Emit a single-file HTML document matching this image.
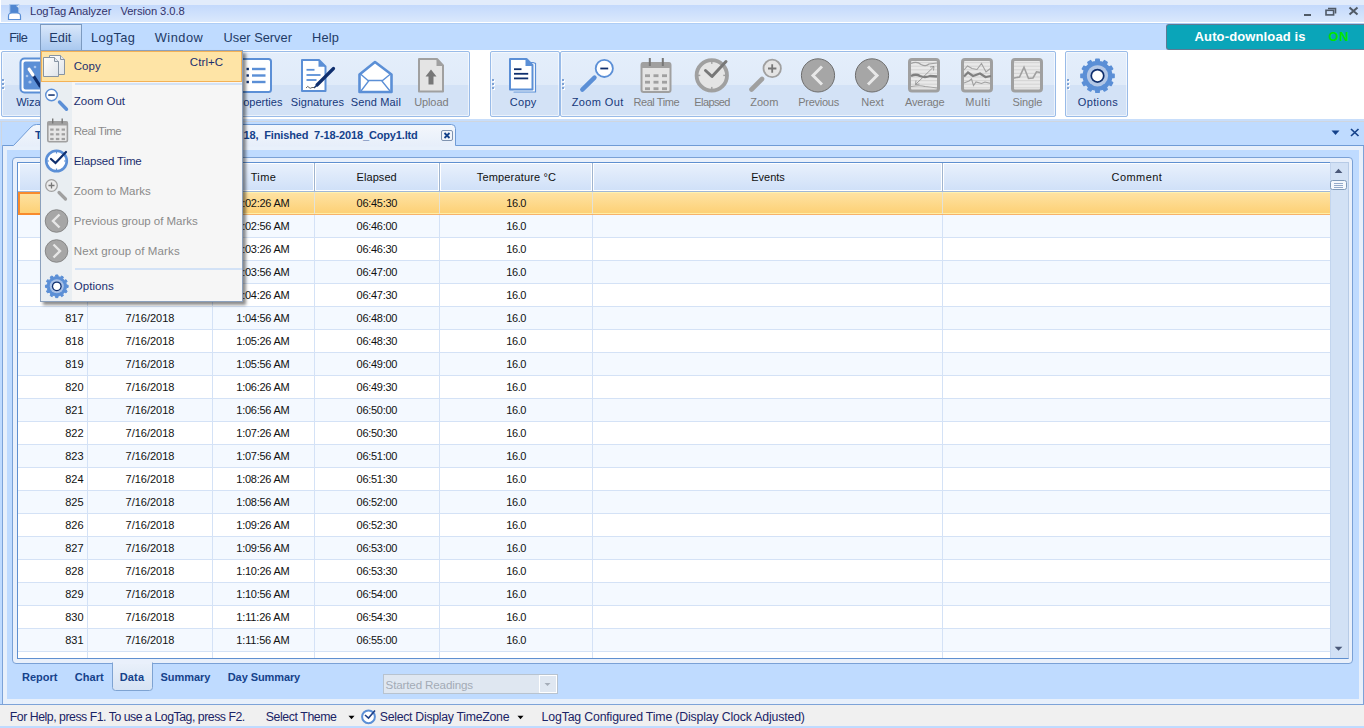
<!DOCTYPE html>
<html><head><meta charset="utf-8"><style>
html,body{margin:0;padding:0;}
body{width:1364px;height:728px;position:relative;overflow:hidden;font-family:"Liberation Sans", sans-serif;background:#bfdbff;}
div{box-sizing:border-box;}
</style></head><body>
<div style="position:absolute;left:0px;top:0px;width:1364px;height:5px;background:#e2ecfb;"></div>
<div style="position:absolute;left:0px;top:5px;width:1364px;height:17px;background:linear-gradient(#c3d9fc,#dae8fc);"></div>
<div style="position:absolute;left:0px;top:22px;width:1364px;height:1px;background:#ffffff;"></div>
<div style="position:absolute;left:0px;top:0px;width:1px;height:22px;background:#ffffff;"></div>
<svg style="position:absolute;left:7px;top:3px" width="15" height="18" viewBox="0 0 15 18"><rect x="2.8" y="1.5" width="9" height="10" fill="#4f86d0" stroke="#a9c8ee" stroke-width="1"/><path d="M11 2 L11.5 4.5 M9.5 3 L11 4" stroke="#fff" stroke-width="0.8"/><path d="M1.5 16.5 V13 Q1.5 10 5 10 H10 Q13.5 10 13.5 13 V16.5 Z" fill="#fff" stroke="#5b8fd6" stroke-width="1.2"/></svg>
<div style="position:absolute;left:30.05px;top:4.68px;font-size:11.2px;line-height:12.88px;color:#33336a;font-weight:normal;white-space:nowrap;letter-spacing:-0.092px;">LogTag Analyzer&nbsp;&nbsp; Version 3.0.8</div>
<div style="position:absolute;left:1304px;top:14px;width:7px;height:2px;background:#505a66;"></div>
<svg style="position:absolute;left:1325px;top:7px" width="12" height="9" viewBox="0 0 12 9"><path d="M3 1.5 H10.5 V6.5" fill="none" stroke="#505a66" stroke-width="1.6"/><rect x="1" y="3.3" width="7.6" height="4.6" fill="none" stroke="#505a66" stroke-width="1.6"/></svg>
<svg style="position:absolute;left:1348px;top:6px" width="11" height="10" viewBox="0 0 11 10"><path d="M1.5 1.5 L9.5 8.5 M9.5 1.5 L1.5 8.5" stroke="#505a66" stroke-width="2"/></svg>
<div style="position:absolute;left:0px;top:23px;width:1364px;height:27px;background:#bfdbff;border-top:1px solid #aecdf5;"></div>
<div style="position:absolute;left:40px;top:24px;width:42px;height:26px;background:linear-gradient(#d9e7fa,#a9c8ef);border:1px solid #7c9ac0;border-bottom:none;"></div>
<div style="position:absolute;left:9.19px;top:30.80px;font-size:12.8px;line-height:14.72px;color:#1e3a66;font-weight:normal;white-space:nowrap;letter-spacing:-0.665px;">File</div>
<div style="position:absolute;left:49.19px;top:30.80px;font-size:12.8px;line-height:14.72px;color:#1e3a66;font-weight:normal;white-space:nowrap;letter-spacing:0.024px;">Edit</div>
<div style="position:absolute;left:90.99px;top:30.80px;font-size:12.8px;line-height:14.72px;color:#1e3a66;font-weight:normal;white-space:nowrap;letter-spacing:0.388px;">LogTag</div>
<div style="position:absolute;left:154.69px;top:30.80px;font-size:12.8px;line-height:14.72px;color:#1e3a66;font-weight:normal;white-space:nowrap;letter-spacing:0.522px;">Window</div>
<div style="position:absolute;left:223.59px;top:30.80px;font-size:12.8px;line-height:14.72px;color:#1e3a66;font-weight:normal;white-space:nowrap;letter-spacing:0.006px;">User Server</div>
<div style="position:absolute;left:312.09px;top:30.80px;font-size:12.8px;line-height:14.72px;color:#1e3a66;font-weight:normal;white-space:nowrap;letter-spacing:0.135px;">Help</div>
<div style="position:absolute;left:1166px;top:24px;width:198px;height:26px;background:#0aa5b9;border:1px solid #5d7a94;border-right:none;border-radius:3px 0 0 3px;"></div>
<div style="position:absolute;left:1194.58px;top:29.72px;font-size:13px;line-height:14.95px;color:#ffffff;font-weight:bold;white-space:nowrap;letter-spacing:0.127px;">Auto-download is</div>
<div style="position:absolute;left:1328.48px;top:29.72px;font-size:13px;line-height:14.95px;color:#00e600;font-weight:bold;white-space:nowrap;letter-spacing:0.740px;">ON</div>
<div style="position:absolute;left:0px;top:50px;width:1364px;height:69px;background:#ffffff;"></div>
<div style="position:absolute;left:1px;top:51px;width:469px;height:66px;background:linear-gradient(#e4eefb 0%,#e0ebf9 51%,#d3e2f6 52%,#d3e2f6 100%);border:1px solid #99bbe8;border-radius:2px;box-shadow:inset 0 0 0 1px rgba(255,255,255,0.6);"></div>
<div style="position:absolute;left:490px;top:51px;width:70px;height:66px;background:linear-gradient(#e4eefb 0%,#e0ebf9 51%,#d3e2f6 52%,#d3e2f6 100%);border:1px solid #99bbe8;border-radius:2px;box-shadow:inset 0 0 0 1px rgba(255,255,255,0.6);"></div>
<div style="position:absolute;left:560px;top:51px;width:496px;height:66px;background:linear-gradient(#e4eefb 0%,#e0ebf9 51%,#d3e2f6 52%,#d3e2f6 100%);border:1px solid #99bbe8;border-radius:2px;box-shadow:inset 0 0 0 1px rgba(255,255,255,0.6);"></div>
<div style="position:absolute;left:1065px;top:51px;width:63px;height:66px;background:linear-gradient(#e4eefb 0%,#e0ebf9 51%,#d3e2f6 52%,#d3e2f6 100%);border:1px solid #99bbe8;border-radius:2px;box-shadow:inset 0 0 0 1px rgba(255,255,255,0.6);"></div>
<svg style="position:absolute;left:2px;top:79px" width="4" height="11" viewBox="0 0 4 11"><rect x="1" y="1" width="2" height="2" fill="#ffffff"/><rect x="1" y="5" width="2" height="2" fill="#ffffff"/><rect x="1" y="9" width="2" height="2" fill="#ffffff"/><rect x="0" y="0" width="2" height="2" fill="#7ea3d6"/><rect x="0" y="4" width="2" height="2" fill="#7ea3d6"/><rect x="0" y="8" width="2" height="2" fill="#7ea3d6"/></svg>
<svg style="position:absolute;left:492px;top:79px" width="4" height="11" viewBox="0 0 4 11"><rect x="1" y="1" width="2" height="2" fill="#ffffff"/><rect x="1" y="5" width="2" height="2" fill="#ffffff"/><rect x="1" y="9" width="2" height="2" fill="#ffffff"/><rect x="0" y="0" width="2" height="2" fill="#7ea3d6"/><rect x="0" y="4" width="2" height="2" fill="#7ea3d6"/><rect x="0" y="8" width="2" height="2" fill="#7ea3d6"/></svg>
<svg style="position:absolute;left:562px;top:79px" width="4" height="11" viewBox="0 0 4 11"><rect x="1" y="1" width="2" height="2" fill="#ffffff"/><rect x="1" y="5" width="2" height="2" fill="#ffffff"/><rect x="1" y="9" width="2" height="2" fill="#ffffff"/><rect x="0" y="0" width="2" height="2" fill="#7ea3d6"/><rect x="0" y="4" width="2" height="2" fill="#7ea3d6"/><rect x="0" y="8" width="2" height="2" fill="#7ea3d6"/></svg>
<svg style="position:absolute;left:1067px;top:79px" width="4" height="11" viewBox="0 0 4 11"><rect x="1" y="1" width="2" height="2" fill="#ffffff"/><rect x="1" y="5" width="2" height="2" fill="#ffffff"/><rect x="1" y="9" width="2" height="2" fill="#ffffff"/><rect x="0" y="0" width="2" height="2" fill="#7ea3d6"/><rect x="0" y="4" width="2" height="2" fill="#7ea3d6"/><rect x="0" y="8" width="2" height="2" fill="#7ea3d6"/></svg>
<div style="position:absolute;left:0px;top:119px;width:1364px;height:2px;background:#c8defb;"></div>
<div style="position:absolute;left:0px;top:121px;width:1364px;height:1px;background:#cfd6e0;"></div>
<svg style="position:absolute;left:0px;top:0px" width="1364" height="120" viewBox="0 0 1364 120"><rect x="20.5" y="58.5" width="33" height="34" rx="4" fill="#fff" stroke="#5b8fd6" stroke-width="2"/><rect x="23.5" y="61.5" width="27" height="28" rx="2" fill="#5b8fd6"/><path d="M29 69 L40 86" stroke="#0f2f6e" stroke-width="3.2" stroke-linecap="round"/><path d="M29 69 L33 75" stroke="#fff" stroke-width="3.2" stroke-linecap="round"/><circle cx="27" cy="76" r="1.3" fill="#a9c6ee"/><circle cx="35" cy="67" r="1.3" fill="#a9c6ee"/><circle cx="30" cy="82" r="1.6" fill="#a9c6ee"/><rect x="239" y="59" width="32" height="33" rx="2.5" fill="#fff" stroke="#5b8fd6" stroke-width="2"/><rect x="246.5" y="67.8" width="2.4" height="2.4" fill="#0f2f6e"/><rect x="252" y="67.8" width="13.5" height="2.4" fill="#5b8fd6"/><rect x="246.5" y="74.3" width="2.4" height="2.4" fill="#0f2f6e"/><rect x="252" y="74.3" width="13.5" height="2.4" fill="#5b8fd6"/><rect x="246.5" y="80.8" width="2.4" height="2.4" fill="#0f2f6e"/><rect x="252" y="80.8" width="13.5" height="2.4" fill="#5b8fd6"/><path d="M302 60 H319 L325.5 66.5 V91 H302 Z" fill="#fff" stroke="#5b8fd6" stroke-width="2" stroke-linejoin="round"/><path d="M318.5 59.5 V66.8 H326 Z" fill="#5b8fd6"/><rect x="306.5" y="68.89999999999999" width="8" height="1.8" fill="#5b8fd6"/><rect x="306.5" y="74.1" width="14" height="1.8" fill="#5b8fd6"/><rect x="306.5" y="79.1" width="10" height="1.8" fill="#5b8fd6"/><path d="M333.5 68.5 L317 85" stroke="#0f2f6e" stroke-width="3.2" stroke-linecap="round"/><path d="M316 86 L314 88" stroke="#0f2f6e" stroke-width="1.5"/><path d="M306 88 Q308 85 309 87.5 Q310 89 312 87.5 L314.5 87.5" fill="none" stroke="#555" stroke-width="0.9"/><path d="M359.5 92 V74.5 L375 62 L391.5 74.5 V92 Z" fill="#fff" stroke="#5b8fd6" stroke-width="2.6" stroke-linejoin="round"/><path d="M360.5 74 L368 80.5 H382.5 L390.5 74 M361 91 L369 80.5 M381.5 80.5 L390 91" fill="none" stroke="#5b8fd6" stroke-width="1.3"/><path d="M419 59 H437 L443 65.5 V91.5 H419 Z" fill="#e4e4e4" stroke="#a0a0a0" stroke-width="2" stroke-linejoin="round"/><path d="M436.5 58.5 V66 H444 Z" fill="#a0a0a0"/><path d="M425.5 76.5 L431 69.5 L436.5 76.5 H433.5 V84.5 H428.5 V76.5 Z" fill="#777777"/><path d="M512.5 62.5 H533 L535.5 63.5 V92 H513.5" fill="#fff" stroke="#5b8fd6" stroke-width="1.2"/><path d="M510 59 H526.5 L532.5 65 V89.5 H510 Z" fill="#fff" stroke="#5b8fd6" stroke-width="2" stroke-linejoin="round"/><path d="M525.5 58.5 V66 H533 Z" fill="#5b8fd6"/><rect x="514" y="68.3" width="7.5" height="1.8" fill="#0f2f6e"/><rect x="514" y="72.89999999999999" width="14.2" height="1.8" fill="#0f2f6e"/><rect x="514" y="77.5" width="14.2" height="1.8" fill="#0f2f6e"/><path d="M582.3 89.6 L594.5 77.6" stroke="#5b8fd6" stroke-width="4.4" stroke-linecap="round"/><circle cx="604.3" cy="68.4" r="8.6" fill="#fff" stroke="#5b8fd6" stroke-width="1.8"/><rect x="600.3" y="67.6" width="7.9" height="1.8" fill="#0f2f6e"/><rect x="641.5" y="63" width="29" height="29" rx="2" fill="#e4e4e4" stroke="#a0a0a0" stroke-width="2"/><rect x="641" y="62.5" width="30" height="5.5" rx="1.5" fill="#a0a0a0"/><rect x="648.8" y="58" width="2" height="8" fill="#777777"/><rect x="661.8" y="58" width="2" height="8" fill="#777777"/><rect x="645" y="74.3" width="5" height="2.8" fill="#a0a0a0"/><rect x="645" y="80.8" width="5" height="2.8" fill="#a0a0a0"/><rect x="645" y="87.3" width="5" height="2.8" fill="#a0a0a0"/><rect x="653.5" y="74.3" width="5" height="2.8" fill="#a0a0a0"/><rect x="653.5" y="80.8" width="5" height="2.8" fill="#a0a0a0"/><rect x="653.5" y="87.3" width="5" height="2.8" fill="#a0a0a0"/><rect x="662" y="74.3" width="5" height="2.8" fill="#a0a0a0"/><rect x="662" y="80.8" width="5" height="2.8" fill="#a0a0a0"/><rect x="662" y="87.3" width="5" height="2.8" fill="#a0a0a0"/><circle cx="711.8" cy="75.4" r="15.2" fill="#e4e4e4" stroke="#a0a0a0" stroke-width="3.8"/><rect x="711.0999999999999" y="61.400000000000006" width="1.4" height="2.5" fill="#a0a0a0"/><rect x="711.0999999999999" y="86.9" width="1.4" height="2.5" fill="#a0a0a0"/><rect x="697.8" y="74.7" width="2.5" height="1.4" fill="#a0a0a0"/><rect x="723.3" y="74.7" width="2.5" height="1.4" fill="#a0a0a0"/><path d="M705.5 70.5 L712 76.5 L726 61.5" fill="none" stroke="#777777" stroke-width="3" stroke-linecap="round" stroke-linejoin="round"/><path d="M751.5 89.5 L762 79" stroke="#a0a0a0" stroke-width="4.6" stroke-linecap="round"/><circle cx="772.2" cy="68.4" r="8.7" fill="#e4e4e4" stroke="#a0a0a0" stroke-width="1.8"/><path d="M768 68.5 H776.4 M772.2 64.3 V72.7" stroke="#777777" stroke-width="1.8"/><circle cx="818" cy="75.4" r="16.6" fill="#a6a6a6" stroke="#6e6e6e" stroke-width="1"/><path d="M822 66.5 L813 75.5 L822 84.5" fill="none" stroke="#e8e8e8" stroke-width="3"/><circle cx="872" cy="75.4" r="16.6" fill="#a6a6a6" stroke="#6e6e6e" stroke-width="1"/><path d="M868 66.5 L877 75.5 L868 84.5" fill="none" stroke="#e8e8e8" stroke-width="3"/><rect x="909.5" y="59.5" width="29" height="31.5" rx="2.5" fill="#e9e9e9" stroke="#a0a0a0" stroke-width="3"/><rect x="911" y="62.0" width="26" height="1.2" fill="#d6d6d6"/><rect x="911" y="65.6" width="26" height="1.2" fill="#d6d6d6"/><rect x="911" y="69.2" width="26" height="1.2" fill="#d6d6d6"/><rect x="911" y="72.8" width="26" height="1.2" fill="#d6d6d6"/><rect x="911" y="76.4" width="26" height="1.2" fill="#d6d6d6"/><rect x="911" y="80.0" width="26" height="1.2" fill="#d6d6d6"/><rect x="911" y="83.6" width="26" height="1.2" fill="#d6d6d6"/><rect x="911" y="87.2" width="26" height="1.2" fill="#d6d6d6"/><path d="M911 63.5 Q917 61 921 64.5 Q926 67 929 64 L937 63" fill="none" stroke="#a0a0a0" stroke-width="1.2"/><path d="M911 76 Q916 73.5 920 76 Q925 78 930 76 L937 76.5" fill="none" stroke="#808080" stroke-width="2.4"/><path d="M911 86.5 Q920 85 925 86.5 Q931 87 937 88" fill="none" stroke="#a0a0a0" stroke-width="1.2"/><path d="M915.5 84.5 L934 66.5 M934 66.5 L930 67 M934 66.5 L933.5 70.5 M915.5 84.5 L919.5 84 M915.5 84.5 L916 80.5" fill="none" stroke="#8a8a8a" stroke-width="0.8"/><rect x="962.5" y="59.5" width="29" height="31.5" rx="2.5" fill="#e9e9e9" stroke="#a0a0a0" stroke-width="3"/><rect x="964" y="62.0" width="26" height="1.2" fill="#d6d6d6"/><rect x="964" y="65.6" width="26" height="1.2" fill="#d6d6d6"/><rect x="964" y="69.2" width="26" height="1.2" fill="#d6d6d6"/><rect x="964" y="72.8" width="26" height="1.2" fill="#d6d6d6"/><rect x="964" y="76.4" width="26" height="1.2" fill="#d6d6d6"/><rect x="964" y="80.0" width="26" height="1.2" fill="#d6d6d6"/><rect x="964" y="83.6" width="26" height="1.2" fill="#d6d6d6"/><rect x="964" y="87.2" width="26" height="1.2" fill="#d6d6d6"/><path d="M964 70 L967.5 66 L972 68.5 L977 69.5 L981.5 63.5 L986 72 L991 68" fill="none" stroke="#a0a0a0" stroke-width="1.1"/><path d="M964 76.5 L968 72.5 L973 76 L980 73.5 L985.5 77 L991 76" fill="none" stroke="#808080" stroke-width="2.2"/><path d="M964 83 L969 81 L971.5 79 L973.5 85.5 L976 82 L981.5 83.5 L985 82 L991 83.5" fill="none" stroke="#a0a0a0" stroke-width="1.1"/><rect x="1012.5" y="59.5" width="29" height="31.5" rx="2.5" fill="#e9e9e9" stroke="#a0a0a0" stroke-width="3"/><rect x="1014" y="62.0" width="26" height="1.2" fill="#d6d6d6"/><rect x="1014" y="65.6" width="26" height="1.2" fill="#d6d6d6"/><rect x="1014" y="69.2" width="26" height="1.2" fill="#d6d6d6"/><rect x="1014" y="72.8" width="26" height="1.2" fill="#d6d6d6"/><rect x="1014" y="76.4" width="26" height="1.2" fill="#d6d6d6"/><rect x="1014" y="80.0" width="26" height="1.2" fill="#d6d6d6"/><rect x="1014" y="83.6" width="26" height="1.2" fill="#d6d6d6"/><rect x="1014" y="87.2" width="26" height="1.2" fill="#d6d6d6"/><path d="M1013 78.2 L1019.5 77 L1024 67.3 L1028.5 78.5 L1033 78 L1036.5 71.8 L1041 72.6" fill="none" stroke="#a0a0a0" stroke-width="1.6"/><path d="M1111.31,72.10 L1111.68,73.93 L1114.12,74.14 L1114.12,77.46 L1111.68,77.67 L1111.31,79.50 L1111.31,79.50 L1110.71,81.27 L1112.72,82.67 L1111.06,85.55 L1108.84,84.51 L1107.61,85.91 L1107.61,85.91 L1106.21,87.14 L1107.25,89.36 L1104.37,91.02 L1102.97,89.01 L1101.20,89.61 L1101.20,89.61 L1099.37,89.98 L1099.16,92.42 L1095.84,92.42 L1095.63,89.98 L1093.80,89.61 L1093.80,89.61 L1092.03,89.01 L1090.63,91.02 L1087.75,89.36 L1088.79,87.14 L1087.39,85.91 L1087.39,85.91 L1086.16,84.51 L1083.94,85.55 L1082.28,82.67 L1084.29,81.27 L1083.69,79.50 L1083.69,79.50 L1083.32,77.67 L1080.88,77.46 L1080.88,74.14 L1083.32,73.93 L1083.69,72.10 L1083.69,72.10 L1084.29,70.33 L1082.28,68.93 L1083.94,66.05 L1086.16,67.09 L1087.39,65.69 L1087.39,65.69 L1088.79,64.46 L1087.75,62.24 L1090.63,60.58 L1092.03,62.59 L1093.80,61.99 L1093.80,61.99 L1095.63,61.62 L1095.84,59.18 L1099.16,59.18 L1099.37,61.62 L1101.20,61.99 L1101.20,61.99 L1102.97,62.59 L1104.37,60.58 L1107.25,62.24 L1106.21,64.46 L1107.61,65.69 L1107.61,65.69 L1108.84,67.09 L1111.06,66.05 L1112.72,68.93 L1110.71,70.33 L1111.31,72.10 Z" fill="#5b8fd6" stroke="#5b8fd6" stroke-width="1.4" stroke-linejoin="round"/><circle cx="1097.5" cy="75.8" r="10.6" fill="#b3c7e6"/><circle cx="1097.5" cy="75.8" r="7.1" fill="#0f2f6e"/><circle cx="1097.5" cy="75.8" r="5.4" fill="#fff"/></svg>
<div style="position:absolute;left:16.20px;top:95.66px;font-size:11px;line-height:12.65px;color:#16387a;font-weight:normal;white-space:nowrap;">Wizard</div>
<div style="position:absolute;left:82.40px;width:200px;text-align:right;top:95.66px;font-size:11px;line-height:12.65px;color:#16387a;font-weight:normal;white-space:nowrap;">Properties</div>
<div style="position:absolute;left:167.48px;width:300px;text-align:center;top:95.66px;font-size:11px;line-height:12.65px;color:#16387a;font-weight:normal;white-space:nowrap;letter-spacing:0.066px;">Signatures</div>
<div style="position:absolute;left:225.92px;width:300px;text-align:center;top:95.66px;font-size:11px;line-height:12.65px;color:#16387a;font-weight:normal;white-space:nowrap;letter-spacing:0.133px;">Send Mail</div>
<div style="position:absolute;left:281.30px;width:300px;text-align:center;top:95.66px;font-size:11px;line-height:12.65px;color:#7c7c7c;font-weight:normal;white-space:nowrap;letter-spacing:-0.096px;">Upload</div>
<div style="position:absolute;left:373.20px;width:300px;text-align:center;top:95.66px;font-size:11px;line-height:12.65px;color:#16387a;font-weight:normal;white-space:nowrap;letter-spacing:0.300px;">Copy</div>
<div style="position:absolute;left:447.76px;width:300px;text-align:center;top:95.66px;font-size:11px;line-height:12.65px;color:#16387a;font-weight:normal;white-space:nowrap;letter-spacing:0.411px;">Zoom Out</div>
<div style="position:absolute;left:506.32px;width:300px;text-align:center;top:95.66px;font-size:11px;line-height:12.65px;color:#7c7c7c;font-weight:normal;white-space:nowrap;letter-spacing:-0.411px;">Real Time</div>
<div style="position:absolute;left:562.09px;width:300px;text-align:center;top:95.66px;font-size:11px;line-height:12.65px;color:#7c7c7c;font-weight:normal;white-space:nowrap;letter-spacing:-0.612px;">Elapsed</div>
<div style="position:absolute;left:614.26px;width:300px;text-align:center;top:95.66px;font-size:11px;line-height:12.65px;color:#7c7c7c;font-weight:normal;white-space:nowrap;letter-spacing:0.021px;">Zoom</div>
<div style="position:absolute;left:668.55px;width:300px;text-align:center;top:95.66px;font-size:11px;line-height:12.65px;color:#7c7c7c;font-weight:normal;white-space:nowrap;letter-spacing:-0.252px;">Previous</div>
<div style="position:absolute;left:722.58px;width:300px;text-align:center;top:95.66px;font-size:11px;line-height:12.65px;color:#7c7c7c;font-weight:normal;white-space:nowrap;letter-spacing:-0.046px;">Next</div>
<div style="position:absolute;left:774.75px;width:300px;text-align:center;top:95.66px;font-size:11px;line-height:12.65px;color:#7c7c7c;font-weight:normal;white-space:nowrap;letter-spacing:-0.199px;">Average</div>
<div style="position:absolute;left:827.87px;width:300px;text-align:center;top:95.66px;font-size:11px;line-height:12.65px;color:#7c7c7c;font-weight:normal;white-space:nowrap;letter-spacing:0.439px;">Multi</div>
<div style="position:absolute;left:877.39px;width:300px;text-align:center;top:95.66px;font-size:11px;line-height:12.65px;color:#7c7c7c;font-weight:normal;white-space:nowrap;letter-spacing:-0.120px;">Single</div>
<div style="position:absolute;left:948.02px;width:300px;text-align:center;top:95.66px;font-size:11px;line-height:12.65px;color:#16387a;font-weight:normal;white-space:nowrap;letter-spacing:0.345px;">Options</div>
<div style="position:absolute;left:0px;top:122px;width:1364px;height:24px;background:#bfdbff;"></div>
<div style="position:absolute;left:2px;top:146px;width:1362px;height:559px;border:1px solid #7da3d8;border-top:none;background:#e8f0fb;"></div>
<div style="position:absolute;left:7px;top:150px;width:1352px;height:549px;background:#bfdbff;"></div>
<svg style="position:absolute;left:0px;top:122px" width="1364" height="25" viewBox="0 0 1364 25"><defs><linearGradient id="tabg" x1="0" y1="0" x2="0" y2="1"><stop offset="0" stop-color="#f4f7fc"/><stop offset="1" stop-color="#e6eefa"/></linearGradient></defs><path d="M2.5 24.5 V23.5 H13.5 L31 5 Q33.5 2.5 36.5 2.5 H451.5 Q455.5 2.5 455.5 6.5 V24.5 Z" fill="url(#tabg)"/><path d="M2.5 24.5 V23.5 H13.5 L31 5 Q33.5 2.5 36.5 2.5 H451.5 Q455.5 2.5 455.5 6.5 V23.5 H1364" fill="none" stroke="#6f9bd6" stroke-width="1"/></svg>
<div style="position:absolute;left:1px;top:121px;width:1px;height:25px;background:#cfd6e0;"></div>
<div style="position:absolute;left:35.00px;top:128.76px;font-size:11px;line-height:12.65px;color:#15428b;font-weight:bold;white-space:nowrap;">Tag ID 1234567890, Started</div>
<div style="position:absolute;left:243.56px;top:128.76px;font-size:11px;line-height:12.65px;color:#15428b;font-weight:bold;white-space:nowrap;letter-spacing:-0.147px;">18,&nbsp; Finished&nbsp; 7-18-2018_Copy1.ltd</div>
<div style="position:absolute;left:441px;top:130px;width:12px;height:11px;background:#f2f5fa;border:1px solid #7f93b0;border-radius:2px;"></div>
<svg style="position:absolute;left:441px;top:130px" width="12" height="11" viewBox="0 0 12 11"><path d="M3.5 3 L8.5 8 M8.5 3 L3.5 8" stroke="#15428b" stroke-width="1.8"/></svg>
<svg style="position:absolute;left:1331px;top:130px" width="10" height="6" viewBox="0 0 10 6"><path d="M0.5 0.5 H8.5 L4.5 5 Z" fill="#15428b"/></svg>
<svg style="position:absolute;left:1350px;top:128px" width="10" height="9" viewBox="0 0 10 9"><path d="M1 1 L8.5 8 M8.5 1 L1 8" stroke="#15428b" stroke-width="1.7"/></svg>
<div style="position:absolute;left:12px;top:157px;width:1341px;height:507px;border:1px solid #7aa1d6;border-radius:4px;background:#e9f0fb;"></div>
<div style="position:absolute;left:17px;top:162px;width:1332px;height:497px;border:1px solid #5e8fd0;border-right-color:#b7cbe6;background:#ffffff;"></div>
<div style="position:absolute;left:1330px;top:162px;width:19px;height:1px;background:#b7cbe6;"></div>
<div style="position:absolute;left:18px;top:163px;width:1312px;height:28px;background:linear-gradient(#e8f0fc,#cfe0f8);border-top:1px solid #ffffff;"></div>
<div style="position:absolute;left:18px;top:190px;width:1312px;height:1px;background:#ffffff;"></div>
<div style="position:absolute;left:18px;top:163px;width:2px;height:28px;background:#ffffff;"></div>
<div style="position:absolute;left:18px;top:191px;width:1312px;height:1px;background:#9fb6d6;"></div>
<div style="position:absolute;left:87px;top:163px;width:1px;height:28px;background:#9fb4cf;"></div>
<div style="position:absolute;left:88px;top:164px;width:1px;height:26px;background:#ffffff;"></div>
<div style="position:absolute;left:86px;top:164px;width:1px;height:26px;background:#ffffff;"></div>
<div style="position:absolute;left:212px;top:163px;width:1px;height:28px;background:#9fb4cf;"></div>
<div style="position:absolute;left:213px;top:164px;width:1px;height:26px;background:#ffffff;"></div>
<div style="position:absolute;left:211px;top:164px;width:1px;height:26px;background:#ffffff;"></div>
<div style="position:absolute;left:314px;top:163px;width:1px;height:28px;background:#9fb4cf;"></div>
<div style="position:absolute;left:315px;top:164px;width:1px;height:26px;background:#ffffff;"></div>
<div style="position:absolute;left:313px;top:164px;width:1px;height:26px;background:#ffffff;"></div>
<div style="position:absolute;left:439px;top:163px;width:1px;height:28px;background:#9fb4cf;"></div>
<div style="position:absolute;left:440px;top:164px;width:1px;height:26px;background:#ffffff;"></div>
<div style="position:absolute;left:438px;top:164px;width:1px;height:26px;background:#ffffff;"></div>
<div style="position:absolute;left:592px;top:163px;width:1px;height:28px;background:#9fb4cf;"></div>
<div style="position:absolute;left:593px;top:164px;width:1px;height:26px;background:#ffffff;"></div>
<div style="position:absolute;left:591px;top:164px;width:1px;height:26px;background:#ffffff;"></div>
<div style="position:absolute;left:942px;top:163px;width:1px;height:28px;background:#9fb4cf;"></div>
<div style="position:absolute;left:943px;top:164px;width:1px;height:26px;background:#ffffff;"></div>
<div style="position:absolute;left:941px;top:164px;width:1px;height:26px;background:#ffffff;"></div>
<div style="position:absolute;left:18.00px;width:70px;text-align:center;top:170.56px;font-size:11px;line-height:12.65px;color:#111111;font-weight:normal;white-space:nowrap;">No.</div>
<div style="position:absolute;left:88.00px;width:125px;text-align:center;top:170.56px;font-size:11px;line-height:12.65px;color:#111111;font-weight:normal;white-space:nowrap;">Date</div>
<div style="position:absolute;left:212.51px;width:102px;text-align:center;top:170.56px;font-size:11px;line-height:12.65px;color:#111111;font-weight:normal;white-space:nowrap;letter-spacing:0.415px;">Time</div>
<div style="position:absolute;left:314.19px;width:125px;text-align:center;top:170.56px;font-size:11px;line-height:12.65px;color:#111111;font-weight:normal;white-space:nowrap;letter-spacing:0.071px;">Elapsed</div>
<div style="position:absolute;left:439.98px;width:153px;text-align:center;top:170.56px;font-size:11px;line-height:12.65px;color:#111111;font-weight:normal;white-space:nowrap;letter-spacing:0.164px;">Temperature °C</div>
<div style="position:absolute;left:593.00px;width:350px;text-align:center;top:170.56px;font-size:11px;line-height:12.65px;color:#111111;font-weight:normal;white-space:nowrap;">Events</div>
<div style="position:absolute;left:943.48px;width:387px;text-align:center;top:170.56px;font-size:11px;line-height:12.65px;color:#111111;font-weight:normal;white-space:nowrap;letter-spacing:0.450px;">Comment</div>
<div style="position:absolute;left:18px;top:192px;width:1312px;height:466px;overflow:hidden"><div style="position:absolute;left:-18px;top:-192px;width:1364px;height:728px">
<div style="position:absolute;left:18px;top:192px;width:1312px;height:23px;background:linear-gradient(#fee2a2,#fdd074);border-top:1px solid #fff2b0;border-bottom:1px solid #f7b36b;"></div>
<div style="position:absolute;left:18px;top:213px;width:1312px;height:1px;background:#ffeea6;"></div>
<div style="position:absolute;left:18px;top:192px;width:69px;height:23px;border:2px solid #f88b2c;border-right:none;"></div>
<div style="position:absolute;left:87px;top:192px;width:1px;height:22px;background:#e3e2d8;"></div>
<div style="position:absolute;left:212px;top:192px;width:1px;height:22px;background:#e3e2d8;"></div>
<div style="position:absolute;left:314px;top:192px;width:1px;height:22px;background:#e3e2d8;"></div>
<div style="position:absolute;left:439px;top:192px;width:1px;height:22px;background:#e3e2d8;"></div>
<div style="position:absolute;left:592px;top:192px;width:1px;height:22px;background:#e3e2d8;"></div>
<div style="position:absolute;left:942px;top:192px;width:1px;height:22px;background:#e3e2d8;"></div>
<div style="position:absolute;left:23.50px;width:60px;text-align:right;top:196.56px;font-size:11px;line-height:12.65px;color:#111;font-weight:normal;white-space:nowrap;">812</div>
<div style="position:absolute;left:90.00px;width:120px;text-align:center;top:196.56px;font-size:11px;line-height:12.65px;color:#111;font-weight:normal;white-space:nowrap;">7/16/2018</div>
<div style="position:absolute;left:212.87px;width:100px;text-align:center;top:196.56px;font-size:11px;line-height:12.65px;color:#111;font-weight:normal;white-space:nowrap;letter-spacing:-0.264px;">1:02:26 AM</div>
<div style="position:absolute;left:316.86px;width:120px;text-align:center;top:196.56px;font-size:11px;line-height:12.65px;color:#111;font-weight:normal;white-space:nowrap;letter-spacing:-0.277px;">06:45:30</div>
<div style="position:absolute;left:441.11px;width:150px;text-align:center;top:196.56px;font-size:11px;line-height:12.65px;color:#111;font-weight:normal;white-space:nowrap;letter-spacing:-0.476px;">16.0</div>
<div style="position:absolute;left:18px;top:215px;width:1312px;height:22px;background:#f4f9ff;"></div>
<div style="position:absolute;left:18px;top:237px;width:1312px;height:1px;background:#d4e2f6;"></div>
<div style="position:absolute;left:87px;top:215px;width:1px;height:22px;background:#d4e2f6;"></div>
<div style="position:absolute;left:212px;top:215px;width:1px;height:22px;background:#d4e2f6;"></div>
<div style="position:absolute;left:314px;top:215px;width:1px;height:22px;background:#d4e2f6;"></div>
<div style="position:absolute;left:439px;top:215px;width:1px;height:22px;background:#d4e2f6;"></div>
<div style="position:absolute;left:592px;top:215px;width:1px;height:22px;background:#d4e2f6;"></div>
<div style="position:absolute;left:942px;top:215px;width:1px;height:22px;background:#d4e2f6;"></div>
<div style="position:absolute;left:23.50px;width:60px;text-align:right;top:219.56px;font-size:11px;line-height:12.65px;color:#111;font-weight:normal;white-space:nowrap;">813</div>
<div style="position:absolute;left:90.00px;width:120px;text-align:center;top:219.56px;font-size:11px;line-height:12.65px;color:#111;font-weight:normal;white-space:nowrap;">7/16/2018</div>
<div style="position:absolute;left:212.87px;width:100px;text-align:center;top:219.56px;font-size:11px;line-height:12.65px;color:#111;font-weight:normal;white-space:nowrap;letter-spacing:-0.264px;">1:02:56 AM</div>
<div style="position:absolute;left:316.86px;width:120px;text-align:center;top:219.56px;font-size:11px;line-height:12.65px;color:#111;font-weight:normal;white-space:nowrap;letter-spacing:-0.277px;">06:46:00</div>
<div style="position:absolute;left:441.11px;width:150px;text-align:center;top:219.56px;font-size:11px;line-height:12.65px;color:#111;font-weight:normal;white-space:nowrap;letter-spacing:-0.476px;">16.0</div>
<div style="position:absolute;left:18px;top:238px;width:1312px;height:22px;background:#ffffff;"></div>
<div style="position:absolute;left:18px;top:260px;width:1312px;height:1px;background:#d4e2f6;"></div>
<div style="position:absolute;left:87px;top:238px;width:1px;height:22px;background:#d4e2f6;"></div>
<div style="position:absolute;left:212px;top:238px;width:1px;height:22px;background:#d4e2f6;"></div>
<div style="position:absolute;left:314px;top:238px;width:1px;height:22px;background:#d4e2f6;"></div>
<div style="position:absolute;left:439px;top:238px;width:1px;height:22px;background:#d4e2f6;"></div>
<div style="position:absolute;left:592px;top:238px;width:1px;height:22px;background:#d4e2f6;"></div>
<div style="position:absolute;left:942px;top:238px;width:1px;height:22px;background:#d4e2f6;"></div>
<div style="position:absolute;left:23.50px;width:60px;text-align:right;top:242.56px;font-size:11px;line-height:12.65px;color:#111;font-weight:normal;white-space:nowrap;">814</div>
<div style="position:absolute;left:90.00px;width:120px;text-align:center;top:242.56px;font-size:11px;line-height:12.65px;color:#111;font-weight:normal;white-space:nowrap;">7/16/2018</div>
<div style="position:absolute;left:212.87px;width:100px;text-align:center;top:242.56px;font-size:11px;line-height:12.65px;color:#111;font-weight:normal;white-space:nowrap;letter-spacing:-0.264px;">1:03:26 AM</div>
<div style="position:absolute;left:316.86px;width:120px;text-align:center;top:242.56px;font-size:11px;line-height:12.65px;color:#111;font-weight:normal;white-space:nowrap;letter-spacing:-0.277px;">06:46:30</div>
<div style="position:absolute;left:441.11px;width:150px;text-align:center;top:242.56px;font-size:11px;line-height:12.65px;color:#111;font-weight:normal;white-space:nowrap;letter-spacing:-0.476px;">16.0</div>
<div style="position:absolute;left:18px;top:261px;width:1312px;height:22px;background:#f4f9ff;"></div>
<div style="position:absolute;left:18px;top:283px;width:1312px;height:1px;background:#d4e2f6;"></div>
<div style="position:absolute;left:87px;top:261px;width:1px;height:22px;background:#d4e2f6;"></div>
<div style="position:absolute;left:212px;top:261px;width:1px;height:22px;background:#d4e2f6;"></div>
<div style="position:absolute;left:314px;top:261px;width:1px;height:22px;background:#d4e2f6;"></div>
<div style="position:absolute;left:439px;top:261px;width:1px;height:22px;background:#d4e2f6;"></div>
<div style="position:absolute;left:592px;top:261px;width:1px;height:22px;background:#d4e2f6;"></div>
<div style="position:absolute;left:942px;top:261px;width:1px;height:22px;background:#d4e2f6;"></div>
<div style="position:absolute;left:23.50px;width:60px;text-align:right;top:265.56px;font-size:11px;line-height:12.65px;color:#111;font-weight:normal;white-space:nowrap;">815</div>
<div style="position:absolute;left:90.00px;width:120px;text-align:center;top:265.56px;font-size:11px;line-height:12.65px;color:#111;font-weight:normal;white-space:nowrap;">7/16/2018</div>
<div style="position:absolute;left:212.87px;width:100px;text-align:center;top:265.56px;font-size:11px;line-height:12.65px;color:#111;font-weight:normal;white-space:nowrap;letter-spacing:-0.264px;">1:03:56 AM</div>
<div style="position:absolute;left:316.86px;width:120px;text-align:center;top:265.56px;font-size:11px;line-height:12.65px;color:#111;font-weight:normal;white-space:nowrap;letter-spacing:-0.277px;">06:47:00</div>
<div style="position:absolute;left:441.11px;width:150px;text-align:center;top:265.56px;font-size:11px;line-height:12.65px;color:#111;font-weight:normal;white-space:nowrap;letter-spacing:-0.476px;">16.0</div>
<div style="position:absolute;left:18px;top:284px;width:1312px;height:22px;background:#ffffff;"></div>
<div style="position:absolute;left:18px;top:306px;width:1312px;height:1px;background:#d4e2f6;"></div>
<div style="position:absolute;left:87px;top:284px;width:1px;height:22px;background:#d4e2f6;"></div>
<div style="position:absolute;left:212px;top:284px;width:1px;height:22px;background:#d4e2f6;"></div>
<div style="position:absolute;left:314px;top:284px;width:1px;height:22px;background:#d4e2f6;"></div>
<div style="position:absolute;left:439px;top:284px;width:1px;height:22px;background:#d4e2f6;"></div>
<div style="position:absolute;left:592px;top:284px;width:1px;height:22px;background:#d4e2f6;"></div>
<div style="position:absolute;left:942px;top:284px;width:1px;height:22px;background:#d4e2f6;"></div>
<div style="position:absolute;left:23.50px;width:60px;text-align:right;top:288.56px;font-size:11px;line-height:12.65px;color:#111;font-weight:normal;white-space:nowrap;">816</div>
<div style="position:absolute;left:90.00px;width:120px;text-align:center;top:288.56px;font-size:11px;line-height:12.65px;color:#111;font-weight:normal;white-space:nowrap;">7/16/2018</div>
<div style="position:absolute;left:212.87px;width:100px;text-align:center;top:288.56px;font-size:11px;line-height:12.65px;color:#111;font-weight:normal;white-space:nowrap;letter-spacing:-0.264px;">1:04:26 AM</div>
<div style="position:absolute;left:316.86px;width:120px;text-align:center;top:288.56px;font-size:11px;line-height:12.65px;color:#111;font-weight:normal;white-space:nowrap;letter-spacing:-0.277px;">06:47:30</div>
<div style="position:absolute;left:441.11px;width:150px;text-align:center;top:288.56px;font-size:11px;line-height:12.65px;color:#111;font-weight:normal;white-space:nowrap;letter-spacing:-0.476px;">16.0</div>
<div style="position:absolute;left:18px;top:307px;width:1312px;height:22px;background:#f4f9ff;"></div>
<div style="position:absolute;left:18px;top:329px;width:1312px;height:1px;background:#d4e2f6;"></div>
<div style="position:absolute;left:87px;top:307px;width:1px;height:22px;background:#d4e2f6;"></div>
<div style="position:absolute;left:212px;top:307px;width:1px;height:22px;background:#d4e2f6;"></div>
<div style="position:absolute;left:314px;top:307px;width:1px;height:22px;background:#d4e2f6;"></div>
<div style="position:absolute;left:439px;top:307px;width:1px;height:22px;background:#d4e2f6;"></div>
<div style="position:absolute;left:592px;top:307px;width:1px;height:22px;background:#d4e2f6;"></div>
<div style="position:absolute;left:942px;top:307px;width:1px;height:22px;background:#d4e2f6;"></div>
<div style="position:absolute;left:23.50px;width:60px;text-align:right;top:311.56px;font-size:11px;line-height:12.65px;color:#111;font-weight:normal;white-space:nowrap;">817</div>
<div style="position:absolute;left:90.00px;width:120px;text-align:center;top:311.56px;font-size:11px;line-height:12.65px;color:#111;font-weight:normal;white-space:nowrap;">7/16/2018</div>
<div style="position:absolute;left:212.87px;width:100px;text-align:center;top:311.56px;font-size:11px;line-height:12.65px;color:#111;font-weight:normal;white-space:nowrap;letter-spacing:-0.264px;">1:04:56 AM</div>
<div style="position:absolute;left:316.86px;width:120px;text-align:center;top:311.56px;font-size:11px;line-height:12.65px;color:#111;font-weight:normal;white-space:nowrap;letter-spacing:-0.277px;">06:48:00</div>
<div style="position:absolute;left:441.11px;width:150px;text-align:center;top:311.56px;font-size:11px;line-height:12.65px;color:#111;font-weight:normal;white-space:nowrap;letter-spacing:-0.476px;">16.0</div>
<div style="position:absolute;left:18px;top:330px;width:1312px;height:22px;background:#ffffff;"></div>
<div style="position:absolute;left:18px;top:352px;width:1312px;height:1px;background:#d4e2f6;"></div>
<div style="position:absolute;left:87px;top:330px;width:1px;height:22px;background:#d4e2f6;"></div>
<div style="position:absolute;left:212px;top:330px;width:1px;height:22px;background:#d4e2f6;"></div>
<div style="position:absolute;left:314px;top:330px;width:1px;height:22px;background:#d4e2f6;"></div>
<div style="position:absolute;left:439px;top:330px;width:1px;height:22px;background:#d4e2f6;"></div>
<div style="position:absolute;left:592px;top:330px;width:1px;height:22px;background:#d4e2f6;"></div>
<div style="position:absolute;left:942px;top:330px;width:1px;height:22px;background:#d4e2f6;"></div>
<div style="position:absolute;left:23.50px;width:60px;text-align:right;top:334.56px;font-size:11px;line-height:12.65px;color:#111;font-weight:normal;white-space:nowrap;">818</div>
<div style="position:absolute;left:90.00px;width:120px;text-align:center;top:334.56px;font-size:11px;line-height:12.65px;color:#111;font-weight:normal;white-space:nowrap;">7/16/2018</div>
<div style="position:absolute;left:212.87px;width:100px;text-align:center;top:334.56px;font-size:11px;line-height:12.65px;color:#111;font-weight:normal;white-space:nowrap;letter-spacing:-0.264px;">1:05:26 AM</div>
<div style="position:absolute;left:316.86px;width:120px;text-align:center;top:334.56px;font-size:11px;line-height:12.65px;color:#111;font-weight:normal;white-space:nowrap;letter-spacing:-0.277px;">06:48:30</div>
<div style="position:absolute;left:441.11px;width:150px;text-align:center;top:334.56px;font-size:11px;line-height:12.65px;color:#111;font-weight:normal;white-space:nowrap;letter-spacing:-0.476px;">16.0</div>
<div style="position:absolute;left:18px;top:353px;width:1312px;height:22px;background:#f4f9ff;"></div>
<div style="position:absolute;left:18px;top:375px;width:1312px;height:1px;background:#d4e2f6;"></div>
<div style="position:absolute;left:87px;top:353px;width:1px;height:22px;background:#d4e2f6;"></div>
<div style="position:absolute;left:212px;top:353px;width:1px;height:22px;background:#d4e2f6;"></div>
<div style="position:absolute;left:314px;top:353px;width:1px;height:22px;background:#d4e2f6;"></div>
<div style="position:absolute;left:439px;top:353px;width:1px;height:22px;background:#d4e2f6;"></div>
<div style="position:absolute;left:592px;top:353px;width:1px;height:22px;background:#d4e2f6;"></div>
<div style="position:absolute;left:942px;top:353px;width:1px;height:22px;background:#d4e2f6;"></div>
<div style="position:absolute;left:23.50px;width:60px;text-align:right;top:357.56px;font-size:11px;line-height:12.65px;color:#111;font-weight:normal;white-space:nowrap;">819</div>
<div style="position:absolute;left:90.00px;width:120px;text-align:center;top:357.56px;font-size:11px;line-height:12.65px;color:#111;font-weight:normal;white-space:nowrap;">7/16/2018</div>
<div style="position:absolute;left:212.87px;width:100px;text-align:center;top:357.56px;font-size:11px;line-height:12.65px;color:#111;font-weight:normal;white-space:nowrap;letter-spacing:-0.264px;">1:05:56 AM</div>
<div style="position:absolute;left:316.86px;width:120px;text-align:center;top:357.56px;font-size:11px;line-height:12.65px;color:#111;font-weight:normal;white-space:nowrap;letter-spacing:-0.277px;">06:49:00</div>
<div style="position:absolute;left:441.11px;width:150px;text-align:center;top:357.56px;font-size:11px;line-height:12.65px;color:#111;font-weight:normal;white-space:nowrap;letter-spacing:-0.476px;">16.0</div>
<div style="position:absolute;left:18px;top:376px;width:1312px;height:22px;background:#ffffff;"></div>
<div style="position:absolute;left:18px;top:398px;width:1312px;height:1px;background:#d4e2f6;"></div>
<div style="position:absolute;left:87px;top:376px;width:1px;height:22px;background:#d4e2f6;"></div>
<div style="position:absolute;left:212px;top:376px;width:1px;height:22px;background:#d4e2f6;"></div>
<div style="position:absolute;left:314px;top:376px;width:1px;height:22px;background:#d4e2f6;"></div>
<div style="position:absolute;left:439px;top:376px;width:1px;height:22px;background:#d4e2f6;"></div>
<div style="position:absolute;left:592px;top:376px;width:1px;height:22px;background:#d4e2f6;"></div>
<div style="position:absolute;left:942px;top:376px;width:1px;height:22px;background:#d4e2f6;"></div>
<div style="position:absolute;left:23.50px;width:60px;text-align:right;top:380.56px;font-size:11px;line-height:12.65px;color:#111;font-weight:normal;white-space:nowrap;">820</div>
<div style="position:absolute;left:90.00px;width:120px;text-align:center;top:380.56px;font-size:11px;line-height:12.65px;color:#111;font-weight:normal;white-space:nowrap;">7/16/2018</div>
<div style="position:absolute;left:212.87px;width:100px;text-align:center;top:380.56px;font-size:11px;line-height:12.65px;color:#111;font-weight:normal;white-space:nowrap;letter-spacing:-0.264px;">1:06:26 AM</div>
<div style="position:absolute;left:316.86px;width:120px;text-align:center;top:380.56px;font-size:11px;line-height:12.65px;color:#111;font-weight:normal;white-space:nowrap;letter-spacing:-0.277px;">06:49:30</div>
<div style="position:absolute;left:441.11px;width:150px;text-align:center;top:380.56px;font-size:11px;line-height:12.65px;color:#111;font-weight:normal;white-space:nowrap;letter-spacing:-0.476px;">16.0</div>
<div style="position:absolute;left:18px;top:399px;width:1312px;height:22px;background:#f4f9ff;"></div>
<div style="position:absolute;left:18px;top:421px;width:1312px;height:1px;background:#d4e2f6;"></div>
<div style="position:absolute;left:87px;top:399px;width:1px;height:22px;background:#d4e2f6;"></div>
<div style="position:absolute;left:212px;top:399px;width:1px;height:22px;background:#d4e2f6;"></div>
<div style="position:absolute;left:314px;top:399px;width:1px;height:22px;background:#d4e2f6;"></div>
<div style="position:absolute;left:439px;top:399px;width:1px;height:22px;background:#d4e2f6;"></div>
<div style="position:absolute;left:592px;top:399px;width:1px;height:22px;background:#d4e2f6;"></div>
<div style="position:absolute;left:942px;top:399px;width:1px;height:22px;background:#d4e2f6;"></div>
<div style="position:absolute;left:23.50px;width:60px;text-align:right;top:403.56px;font-size:11px;line-height:12.65px;color:#111;font-weight:normal;white-space:nowrap;">821</div>
<div style="position:absolute;left:90.00px;width:120px;text-align:center;top:403.56px;font-size:11px;line-height:12.65px;color:#111;font-weight:normal;white-space:nowrap;">7/16/2018</div>
<div style="position:absolute;left:212.87px;width:100px;text-align:center;top:403.56px;font-size:11px;line-height:12.65px;color:#111;font-weight:normal;white-space:nowrap;letter-spacing:-0.264px;">1:06:56 AM</div>
<div style="position:absolute;left:316.86px;width:120px;text-align:center;top:403.56px;font-size:11px;line-height:12.65px;color:#111;font-weight:normal;white-space:nowrap;letter-spacing:-0.277px;">06:50:00</div>
<div style="position:absolute;left:441.11px;width:150px;text-align:center;top:403.56px;font-size:11px;line-height:12.65px;color:#111;font-weight:normal;white-space:nowrap;letter-spacing:-0.476px;">16.0</div>
<div style="position:absolute;left:18px;top:422px;width:1312px;height:22px;background:#ffffff;"></div>
<div style="position:absolute;left:18px;top:444px;width:1312px;height:1px;background:#d4e2f6;"></div>
<div style="position:absolute;left:87px;top:422px;width:1px;height:22px;background:#d4e2f6;"></div>
<div style="position:absolute;left:212px;top:422px;width:1px;height:22px;background:#d4e2f6;"></div>
<div style="position:absolute;left:314px;top:422px;width:1px;height:22px;background:#d4e2f6;"></div>
<div style="position:absolute;left:439px;top:422px;width:1px;height:22px;background:#d4e2f6;"></div>
<div style="position:absolute;left:592px;top:422px;width:1px;height:22px;background:#d4e2f6;"></div>
<div style="position:absolute;left:942px;top:422px;width:1px;height:22px;background:#d4e2f6;"></div>
<div style="position:absolute;left:23.50px;width:60px;text-align:right;top:426.56px;font-size:11px;line-height:12.65px;color:#111;font-weight:normal;white-space:nowrap;">822</div>
<div style="position:absolute;left:90.00px;width:120px;text-align:center;top:426.56px;font-size:11px;line-height:12.65px;color:#111;font-weight:normal;white-space:nowrap;">7/16/2018</div>
<div style="position:absolute;left:212.87px;width:100px;text-align:center;top:426.56px;font-size:11px;line-height:12.65px;color:#111;font-weight:normal;white-space:nowrap;letter-spacing:-0.264px;">1:07:26 AM</div>
<div style="position:absolute;left:316.86px;width:120px;text-align:center;top:426.56px;font-size:11px;line-height:12.65px;color:#111;font-weight:normal;white-space:nowrap;letter-spacing:-0.277px;">06:50:30</div>
<div style="position:absolute;left:441.11px;width:150px;text-align:center;top:426.56px;font-size:11px;line-height:12.65px;color:#111;font-weight:normal;white-space:nowrap;letter-spacing:-0.476px;">16.0</div>
<div style="position:absolute;left:18px;top:445px;width:1312px;height:22px;background:#f4f9ff;"></div>
<div style="position:absolute;left:18px;top:467px;width:1312px;height:1px;background:#d4e2f6;"></div>
<div style="position:absolute;left:87px;top:445px;width:1px;height:22px;background:#d4e2f6;"></div>
<div style="position:absolute;left:212px;top:445px;width:1px;height:22px;background:#d4e2f6;"></div>
<div style="position:absolute;left:314px;top:445px;width:1px;height:22px;background:#d4e2f6;"></div>
<div style="position:absolute;left:439px;top:445px;width:1px;height:22px;background:#d4e2f6;"></div>
<div style="position:absolute;left:592px;top:445px;width:1px;height:22px;background:#d4e2f6;"></div>
<div style="position:absolute;left:942px;top:445px;width:1px;height:22px;background:#d4e2f6;"></div>
<div style="position:absolute;left:23.50px;width:60px;text-align:right;top:449.56px;font-size:11px;line-height:12.65px;color:#111;font-weight:normal;white-space:nowrap;">823</div>
<div style="position:absolute;left:90.00px;width:120px;text-align:center;top:449.56px;font-size:11px;line-height:12.65px;color:#111;font-weight:normal;white-space:nowrap;">7/16/2018</div>
<div style="position:absolute;left:212.87px;width:100px;text-align:center;top:449.56px;font-size:11px;line-height:12.65px;color:#111;font-weight:normal;white-space:nowrap;letter-spacing:-0.264px;">1:07:56 AM</div>
<div style="position:absolute;left:316.86px;width:120px;text-align:center;top:449.56px;font-size:11px;line-height:12.65px;color:#111;font-weight:normal;white-space:nowrap;letter-spacing:-0.277px;">06:51:00</div>
<div style="position:absolute;left:441.11px;width:150px;text-align:center;top:449.56px;font-size:11px;line-height:12.65px;color:#111;font-weight:normal;white-space:nowrap;letter-spacing:-0.476px;">16.0</div>
<div style="position:absolute;left:18px;top:468px;width:1312px;height:22px;background:#ffffff;"></div>
<div style="position:absolute;left:18px;top:490px;width:1312px;height:1px;background:#d4e2f6;"></div>
<div style="position:absolute;left:87px;top:468px;width:1px;height:22px;background:#d4e2f6;"></div>
<div style="position:absolute;left:212px;top:468px;width:1px;height:22px;background:#d4e2f6;"></div>
<div style="position:absolute;left:314px;top:468px;width:1px;height:22px;background:#d4e2f6;"></div>
<div style="position:absolute;left:439px;top:468px;width:1px;height:22px;background:#d4e2f6;"></div>
<div style="position:absolute;left:592px;top:468px;width:1px;height:22px;background:#d4e2f6;"></div>
<div style="position:absolute;left:942px;top:468px;width:1px;height:22px;background:#d4e2f6;"></div>
<div style="position:absolute;left:23.50px;width:60px;text-align:right;top:472.56px;font-size:11px;line-height:12.65px;color:#111;font-weight:normal;white-space:nowrap;">824</div>
<div style="position:absolute;left:90.00px;width:120px;text-align:center;top:472.56px;font-size:11px;line-height:12.65px;color:#111;font-weight:normal;white-space:nowrap;">7/16/2018</div>
<div style="position:absolute;left:212.87px;width:100px;text-align:center;top:472.56px;font-size:11px;line-height:12.65px;color:#111;font-weight:normal;white-space:nowrap;letter-spacing:-0.264px;">1:08:26 AM</div>
<div style="position:absolute;left:316.86px;width:120px;text-align:center;top:472.56px;font-size:11px;line-height:12.65px;color:#111;font-weight:normal;white-space:nowrap;letter-spacing:-0.277px;">06:51:30</div>
<div style="position:absolute;left:441.11px;width:150px;text-align:center;top:472.56px;font-size:11px;line-height:12.65px;color:#111;font-weight:normal;white-space:nowrap;letter-spacing:-0.476px;">16.0</div>
<div style="position:absolute;left:18px;top:491px;width:1312px;height:22px;background:#f4f9ff;"></div>
<div style="position:absolute;left:18px;top:513px;width:1312px;height:1px;background:#d4e2f6;"></div>
<div style="position:absolute;left:87px;top:491px;width:1px;height:22px;background:#d4e2f6;"></div>
<div style="position:absolute;left:212px;top:491px;width:1px;height:22px;background:#d4e2f6;"></div>
<div style="position:absolute;left:314px;top:491px;width:1px;height:22px;background:#d4e2f6;"></div>
<div style="position:absolute;left:439px;top:491px;width:1px;height:22px;background:#d4e2f6;"></div>
<div style="position:absolute;left:592px;top:491px;width:1px;height:22px;background:#d4e2f6;"></div>
<div style="position:absolute;left:942px;top:491px;width:1px;height:22px;background:#d4e2f6;"></div>
<div style="position:absolute;left:23.50px;width:60px;text-align:right;top:495.56px;font-size:11px;line-height:12.65px;color:#111;font-weight:normal;white-space:nowrap;">825</div>
<div style="position:absolute;left:90.00px;width:120px;text-align:center;top:495.56px;font-size:11px;line-height:12.65px;color:#111;font-weight:normal;white-space:nowrap;">7/16/2018</div>
<div style="position:absolute;left:212.87px;width:100px;text-align:center;top:495.56px;font-size:11px;line-height:12.65px;color:#111;font-weight:normal;white-space:nowrap;letter-spacing:-0.264px;">1:08:56 AM</div>
<div style="position:absolute;left:316.86px;width:120px;text-align:center;top:495.56px;font-size:11px;line-height:12.65px;color:#111;font-weight:normal;white-space:nowrap;letter-spacing:-0.277px;">06:52:00</div>
<div style="position:absolute;left:441.11px;width:150px;text-align:center;top:495.56px;font-size:11px;line-height:12.65px;color:#111;font-weight:normal;white-space:nowrap;letter-spacing:-0.476px;">16.0</div>
<div style="position:absolute;left:18px;top:514px;width:1312px;height:22px;background:#ffffff;"></div>
<div style="position:absolute;left:18px;top:536px;width:1312px;height:1px;background:#d4e2f6;"></div>
<div style="position:absolute;left:87px;top:514px;width:1px;height:22px;background:#d4e2f6;"></div>
<div style="position:absolute;left:212px;top:514px;width:1px;height:22px;background:#d4e2f6;"></div>
<div style="position:absolute;left:314px;top:514px;width:1px;height:22px;background:#d4e2f6;"></div>
<div style="position:absolute;left:439px;top:514px;width:1px;height:22px;background:#d4e2f6;"></div>
<div style="position:absolute;left:592px;top:514px;width:1px;height:22px;background:#d4e2f6;"></div>
<div style="position:absolute;left:942px;top:514px;width:1px;height:22px;background:#d4e2f6;"></div>
<div style="position:absolute;left:23.50px;width:60px;text-align:right;top:518.56px;font-size:11px;line-height:12.65px;color:#111;font-weight:normal;white-space:nowrap;">826</div>
<div style="position:absolute;left:90.00px;width:120px;text-align:center;top:518.56px;font-size:11px;line-height:12.65px;color:#111;font-weight:normal;white-space:nowrap;">7/16/2018</div>
<div style="position:absolute;left:212.87px;width:100px;text-align:center;top:518.56px;font-size:11px;line-height:12.65px;color:#111;font-weight:normal;white-space:nowrap;letter-spacing:-0.264px;">1:09:26 AM</div>
<div style="position:absolute;left:316.86px;width:120px;text-align:center;top:518.56px;font-size:11px;line-height:12.65px;color:#111;font-weight:normal;white-space:nowrap;letter-spacing:-0.277px;">06:52:30</div>
<div style="position:absolute;left:441.11px;width:150px;text-align:center;top:518.56px;font-size:11px;line-height:12.65px;color:#111;font-weight:normal;white-space:nowrap;letter-spacing:-0.476px;">16.0</div>
<div style="position:absolute;left:18px;top:537px;width:1312px;height:22px;background:#f4f9ff;"></div>
<div style="position:absolute;left:18px;top:559px;width:1312px;height:1px;background:#d4e2f6;"></div>
<div style="position:absolute;left:87px;top:537px;width:1px;height:22px;background:#d4e2f6;"></div>
<div style="position:absolute;left:212px;top:537px;width:1px;height:22px;background:#d4e2f6;"></div>
<div style="position:absolute;left:314px;top:537px;width:1px;height:22px;background:#d4e2f6;"></div>
<div style="position:absolute;left:439px;top:537px;width:1px;height:22px;background:#d4e2f6;"></div>
<div style="position:absolute;left:592px;top:537px;width:1px;height:22px;background:#d4e2f6;"></div>
<div style="position:absolute;left:942px;top:537px;width:1px;height:22px;background:#d4e2f6;"></div>
<div style="position:absolute;left:23.50px;width:60px;text-align:right;top:541.56px;font-size:11px;line-height:12.65px;color:#111;font-weight:normal;white-space:nowrap;">827</div>
<div style="position:absolute;left:90.00px;width:120px;text-align:center;top:541.56px;font-size:11px;line-height:12.65px;color:#111;font-weight:normal;white-space:nowrap;">7/16/2018</div>
<div style="position:absolute;left:212.87px;width:100px;text-align:center;top:541.56px;font-size:11px;line-height:12.65px;color:#111;font-weight:normal;white-space:nowrap;letter-spacing:-0.264px;">1:09:56 AM</div>
<div style="position:absolute;left:316.86px;width:120px;text-align:center;top:541.56px;font-size:11px;line-height:12.65px;color:#111;font-weight:normal;white-space:nowrap;letter-spacing:-0.277px;">06:53:00</div>
<div style="position:absolute;left:441.11px;width:150px;text-align:center;top:541.56px;font-size:11px;line-height:12.65px;color:#111;font-weight:normal;white-space:nowrap;letter-spacing:-0.476px;">16.0</div>
<div style="position:absolute;left:18px;top:560px;width:1312px;height:22px;background:#ffffff;"></div>
<div style="position:absolute;left:18px;top:582px;width:1312px;height:1px;background:#d4e2f6;"></div>
<div style="position:absolute;left:87px;top:560px;width:1px;height:22px;background:#d4e2f6;"></div>
<div style="position:absolute;left:212px;top:560px;width:1px;height:22px;background:#d4e2f6;"></div>
<div style="position:absolute;left:314px;top:560px;width:1px;height:22px;background:#d4e2f6;"></div>
<div style="position:absolute;left:439px;top:560px;width:1px;height:22px;background:#d4e2f6;"></div>
<div style="position:absolute;left:592px;top:560px;width:1px;height:22px;background:#d4e2f6;"></div>
<div style="position:absolute;left:942px;top:560px;width:1px;height:22px;background:#d4e2f6;"></div>
<div style="position:absolute;left:23.50px;width:60px;text-align:right;top:564.56px;font-size:11px;line-height:12.65px;color:#111;font-weight:normal;white-space:nowrap;">828</div>
<div style="position:absolute;left:90.00px;width:120px;text-align:center;top:564.56px;font-size:11px;line-height:12.65px;color:#111;font-weight:normal;white-space:nowrap;">7/16/2018</div>
<div style="position:absolute;left:212.87px;width:100px;text-align:center;top:564.56px;font-size:11px;line-height:12.65px;color:#111;font-weight:normal;white-space:nowrap;letter-spacing:-0.264px;">1:10:26 AM</div>
<div style="position:absolute;left:316.86px;width:120px;text-align:center;top:564.56px;font-size:11px;line-height:12.65px;color:#111;font-weight:normal;white-space:nowrap;letter-spacing:-0.277px;">06:53:30</div>
<div style="position:absolute;left:441.11px;width:150px;text-align:center;top:564.56px;font-size:11px;line-height:12.65px;color:#111;font-weight:normal;white-space:nowrap;letter-spacing:-0.476px;">16.0</div>
<div style="position:absolute;left:18px;top:583px;width:1312px;height:22px;background:#f4f9ff;"></div>
<div style="position:absolute;left:18px;top:605px;width:1312px;height:1px;background:#d4e2f6;"></div>
<div style="position:absolute;left:87px;top:583px;width:1px;height:22px;background:#d4e2f6;"></div>
<div style="position:absolute;left:212px;top:583px;width:1px;height:22px;background:#d4e2f6;"></div>
<div style="position:absolute;left:314px;top:583px;width:1px;height:22px;background:#d4e2f6;"></div>
<div style="position:absolute;left:439px;top:583px;width:1px;height:22px;background:#d4e2f6;"></div>
<div style="position:absolute;left:592px;top:583px;width:1px;height:22px;background:#d4e2f6;"></div>
<div style="position:absolute;left:942px;top:583px;width:1px;height:22px;background:#d4e2f6;"></div>
<div style="position:absolute;left:23.50px;width:60px;text-align:right;top:587.56px;font-size:11px;line-height:12.65px;color:#111;font-weight:normal;white-space:nowrap;">829</div>
<div style="position:absolute;left:90.00px;width:120px;text-align:center;top:587.56px;font-size:11px;line-height:12.65px;color:#111;font-weight:normal;white-space:nowrap;">7/16/2018</div>
<div style="position:absolute;left:212.87px;width:100px;text-align:center;top:587.56px;font-size:11px;line-height:12.65px;color:#111;font-weight:normal;white-space:nowrap;letter-spacing:-0.264px;">1:10:56 AM</div>
<div style="position:absolute;left:316.86px;width:120px;text-align:center;top:587.56px;font-size:11px;line-height:12.65px;color:#111;font-weight:normal;white-space:nowrap;letter-spacing:-0.277px;">06:54:00</div>
<div style="position:absolute;left:441.11px;width:150px;text-align:center;top:587.56px;font-size:11px;line-height:12.65px;color:#111;font-weight:normal;white-space:nowrap;letter-spacing:-0.476px;">16.0</div>
<div style="position:absolute;left:18px;top:606px;width:1312px;height:22px;background:#ffffff;"></div>
<div style="position:absolute;left:18px;top:628px;width:1312px;height:1px;background:#d4e2f6;"></div>
<div style="position:absolute;left:87px;top:606px;width:1px;height:22px;background:#d4e2f6;"></div>
<div style="position:absolute;left:212px;top:606px;width:1px;height:22px;background:#d4e2f6;"></div>
<div style="position:absolute;left:314px;top:606px;width:1px;height:22px;background:#d4e2f6;"></div>
<div style="position:absolute;left:439px;top:606px;width:1px;height:22px;background:#d4e2f6;"></div>
<div style="position:absolute;left:592px;top:606px;width:1px;height:22px;background:#d4e2f6;"></div>
<div style="position:absolute;left:942px;top:606px;width:1px;height:22px;background:#d4e2f6;"></div>
<div style="position:absolute;left:23.50px;width:60px;text-align:right;top:610.56px;font-size:11px;line-height:12.65px;color:#111;font-weight:normal;white-space:nowrap;">830</div>
<div style="position:absolute;left:90.00px;width:120px;text-align:center;top:610.56px;font-size:11px;line-height:12.65px;color:#111;font-weight:normal;white-space:nowrap;">7/16/2018</div>
<div style="position:absolute;left:212.91px;width:100px;text-align:center;top:610.56px;font-size:11px;line-height:12.65px;color:#111;font-weight:normal;white-space:nowrap;letter-spacing:-0.173px;">1:11:26 AM</div>
<div style="position:absolute;left:316.86px;width:120px;text-align:center;top:610.56px;font-size:11px;line-height:12.65px;color:#111;font-weight:normal;white-space:nowrap;letter-spacing:-0.277px;">06:54:30</div>
<div style="position:absolute;left:441.11px;width:150px;text-align:center;top:610.56px;font-size:11px;line-height:12.65px;color:#111;font-weight:normal;white-space:nowrap;letter-spacing:-0.476px;">16.0</div>
<div style="position:absolute;left:18px;top:629px;width:1312px;height:22px;background:#f4f9ff;"></div>
<div style="position:absolute;left:18px;top:651px;width:1312px;height:1px;background:#d4e2f6;"></div>
<div style="position:absolute;left:87px;top:629px;width:1px;height:22px;background:#d4e2f6;"></div>
<div style="position:absolute;left:212px;top:629px;width:1px;height:22px;background:#d4e2f6;"></div>
<div style="position:absolute;left:314px;top:629px;width:1px;height:22px;background:#d4e2f6;"></div>
<div style="position:absolute;left:439px;top:629px;width:1px;height:22px;background:#d4e2f6;"></div>
<div style="position:absolute;left:592px;top:629px;width:1px;height:22px;background:#d4e2f6;"></div>
<div style="position:absolute;left:942px;top:629px;width:1px;height:22px;background:#d4e2f6;"></div>
<div style="position:absolute;left:23.50px;width:60px;text-align:right;top:633.56px;font-size:11px;line-height:12.65px;color:#111;font-weight:normal;white-space:nowrap;">831</div>
<div style="position:absolute;left:90.00px;width:120px;text-align:center;top:633.56px;font-size:11px;line-height:12.65px;color:#111;font-weight:normal;white-space:nowrap;">7/16/2018</div>
<div style="position:absolute;left:212.91px;width:100px;text-align:center;top:633.56px;font-size:11px;line-height:12.65px;color:#111;font-weight:normal;white-space:nowrap;letter-spacing:-0.173px;">1:11:56 AM</div>
<div style="position:absolute;left:316.86px;width:120px;text-align:center;top:633.56px;font-size:11px;line-height:12.65px;color:#111;font-weight:normal;white-space:nowrap;letter-spacing:-0.277px;">06:55:00</div>
<div style="position:absolute;left:441.11px;width:150px;text-align:center;top:633.56px;font-size:11px;line-height:12.65px;color:#111;font-weight:normal;white-space:nowrap;letter-spacing:-0.476px;">16.0</div>
<div style="position:absolute;left:18px;top:652px;width:1312px;height:22px;background:#ffffff;"></div>
<div style="position:absolute;left:18px;top:674px;width:1312px;height:1px;background:#d4e2f6;"></div>
<div style="position:absolute;left:87px;top:652px;width:1px;height:22px;background:#d4e2f6;"></div>
<div style="position:absolute;left:212px;top:652px;width:1px;height:22px;background:#d4e2f6;"></div>
<div style="position:absolute;left:314px;top:652px;width:1px;height:22px;background:#d4e2f6;"></div>
<div style="position:absolute;left:439px;top:652px;width:1px;height:22px;background:#d4e2f6;"></div>
<div style="position:absolute;left:592px;top:652px;width:1px;height:22px;background:#d4e2f6;"></div>
<div style="position:absolute;left:942px;top:652px;width:1px;height:22px;background:#d4e2f6;"></div>
<div style="position:absolute;left:23.50px;width:60px;text-align:right;top:656.56px;font-size:11px;line-height:12.65px;color:#111;font-weight:normal;white-space:nowrap;">832</div>
<div style="position:absolute;left:90.00px;width:120px;text-align:center;top:656.56px;font-size:11px;line-height:12.65px;color:#111;font-weight:normal;white-space:nowrap;">7/16/2018</div>
<div style="position:absolute;left:212.87px;width:100px;text-align:center;top:656.56px;font-size:11px;line-height:12.65px;color:#111;font-weight:normal;white-space:nowrap;letter-spacing:-0.264px;">1:12:26 AM</div>
<div style="position:absolute;left:316.86px;width:120px;text-align:center;top:656.56px;font-size:11px;line-height:12.65px;color:#111;font-weight:normal;white-space:nowrap;letter-spacing:-0.277px;">06:55:30</div>
<div style="position:absolute;left:441.11px;width:150px;text-align:center;top:656.56px;font-size:11px;line-height:12.65px;color:#111;font-weight:normal;white-space:nowrap;letter-spacing:-0.476px;">16.0</div>
</div></div>
<div style="position:absolute;left:1330px;top:163px;width:18px;height:495px;background:#d2e1f5;border-left:1px solid #c3d5ee;"></div>
<svg style="position:absolute;left:1330px;top:163px" width="18" height="495" viewBox="0 0 18 495"><path d="M4.7 10 L8.5 5.7 L12.4 10 Z" fill="#4a5878"/><rect x="0.5" y="17.5" width="16" height="9" rx="2" fill="#f4f8fd" stroke="#7f9ab9"/><path d="M4 20.5 H13 M4 22.5 H13 M4 24.5 H13" stroke="#8aa2c4" stroke-width="0.9"/><path d="M4.7 483.7 L8.5 487.7 L12.4 483.7 Z" fill="#4a5878"/></svg>
<svg style="position:absolute;left:110px;top:662px" width="46" height="30" viewBox="0 0 46 30"><path d="M2.5 0.5 V25.5 Q2.5 28.5 5.5 28.5 H39.5 Q42.5 28.5 42.5 25.5 V0.5" fill="url(#btg)" stroke="#7ea3d2" stroke-width="1"/><defs><linearGradient id="btg" x1="0" y1="0" x2="0" y2="1"><stop offset="0" stop-color="#e9f0fa"/><stop offset="1" stop-color="#d6e3f4"/></linearGradient></defs></svg>
<div style="position:absolute;left:113px;top:662px;width:39px;height:2px;background:#e9f0fb;"></div>
<div style="position:absolute;left:-20.26px;width:120px;text-align:center;top:671.46px;font-size:11px;line-height:12.65px;color:#15428b;font-weight:bold;white-space:nowrap;letter-spacing:-0.013px;">Report</div>
<div style="position:absolute;left:29.22px;width:120px;text-align:center;top:671.46px;font-size:11px;line-height:12.65px;color:#15428b;font-weight:bold;white-space:nowrap;letter-spacing:0.039px;">Chart</div>
<div style="position:absolute;left:71.97px;width:120px;text-align:center;top:671.46px;font-size:11px;line-height:12.65px;color:#15428b;font-weight:bold;white-space:nowrap;letter-spacing:0.146px;">Data</div>
<div style="position:absolute;left:125.48px;width:120px;text-align:center;top:671.46px;font-size:11px;line-height:12.65px;color:#15428b;font-weight:bold;white-space:nowrap;letter-spacing:-0.042px;">Summary</div>
<div style="position:absolute;left:203.96px;width:120px;text-align:center;top:671.46px;font-size:11px;line-height:12.65px;color:#15428b;font-weight:bold;white-space:nowrap;letter-spacing:-0.089px;">Day Summary</div>
<div style="position:absolute;left:383px;top:674px;width:175px;height:20px;background:#dfe7f1;border:1px solid #b8c3cf;"></div>
<div style="position:absolute;left:539px;top:675px;width:18px;height:18px;border:1px solid #ffffff;background:#dfe7f1;"></div>
<svg style="position:absolute;left:539px;top:675px" width="18" height="18" viewBox="0 0 18 18"><path d="M5.5 8 H11.5 L8.5 11 Z" fill="#a5adb8"/></svg>
<div style="position:absolute;left:385.54px;top:678.41px;font-size:11.6px;line-height:13.34px;color:#a3abb6;font-weight:normal;white-space:nowrap;letter-spacing:-0.137px;">Started Readings</div>
<div style="position:absolute;left:0px;top:705px;width:1364px;height:21px;background:#f0f0f0;"></div>
<div style="position:absolute;left:0px;top:704px;width:1364px;height:1px;background:#7da3d8;"></div>
<div style="position:absolute;left:0px;top:726px;width:1364px;height:2px;background:#bfdbff;"></div>
<div style="position:absolute;left:9.81px;top:709.57px;font-size:12.3px;line-height:14.14px;color:#1b2466;font-weight:normal;white-space:nowrap;letter-spacing:-0.473px;">For Help, press F1. To use a LogTag, press F2.</div>
<div style="position:absolute;left:265.81px;top:709.57px;font-size:12.3px;line-height:14.14px;color:#1b2466;font-weight:normal;white-space:nowrap;letter-spacing:-0.407px;">Select Theme</div>
<svg style="position:absolute;left:348px;top:715px" width="8" height="5" viewBox="0 0 8 5"><path d="M0.5 0.8 H6.5 L3.5 4.2 Z" fill="#000"/></svg>
<svg style="position:absolute;left:360px;top:708px" width="18" height="18" viewBox="0 0 18 18"><circle cx="8.5" cy="8.8" r="6.4" fill="#fff" stroke="#5b8fd6" stroke-width="2"/><path d="M5 7 L8.5 10 L15 2.5" fill="none" stroke="#1e3f86" stroke-width="1.6"/></svg>
<div style="position:absolute;left:379.81px;top:709.57px;font-size:12.3px;line-height:14.14px;color:#1b2466;font-weight:normal;white-space:nowrap;letter-spacing:-0.288px;">Select Display TimeZone</div>
<svg style="position:absolute;left:517px;top:715px" width="8" height="5" viewBox="0 0 8 5"><path d="M0.5 0.8 H6.5 L3.5 4.2 Z" fill="#000"/></svg>
<div style="position:absolute;left:541.61px;top:709.57px;font-size:12.3px;line-height:14.14px;color:#1b2466;font-weight:normal;white-space:nowrap;letter-spacing:-0.160px;">LogTag Configured Time (Display Clock Adjusted)</div>
<div style="position:absolute;left:40px;top:50px;width:203px;height:252px;background:#f6f6f6;border:1px solid #8ba0bc;box-shadow:3px 3px 3px rgba(0,0,0,0.45);"></div>
<div style="position:absolute;left:41px;top:51px;width:31px;height:250px;background:#e9eef2;"></div>
<div style="position:absolute;left:41px;top:51px;width:201px;height:31px;background:#fee4a6;border:1px solid #f4b256;"></div>
<div style="position:absolute;left:73.64px;top:60.41px;font-size:11.5px;line-height:13.22px;color:#1b2f6e;font-weight:normal;white-space:nowrap;letter-spacing:0.125px;">Copy</div>
<div style="position:absolute;left:189.84px;top:56.31px;font-size:11.5px;line-height:13.22px;color:#1b2f6e;font-weight:normal;white-space:nowrap;letter-spacing:0.083px;">Ctrl+C</div>
<div style="position:absolute;left:75px;top:83px;width:167px;height:2px;background:#d3e2f6;"></div>
<div style="position:absolute;left:75px;top:268px;width:167px;height:2px;background:#d3e2f6;"></div>
<div style="position:absolute;left:73.74px;top:95.21px;font-size:11.5px;line-height:13.22px;color:#1b2f6e;font-weight:normal;white-space:nowrap;letter-spacing:0.028px;">Zoom Out</div>
<div style="position:absolute;left:73.74px;top:125.21px;font-size:11.5px;line-height:13.22px;color:#8a8a8a;font-weight:normal;white-space:nowrap;letter-spacing:-0.469px;">Real Time</div>
<div style="position:absolute;left:73.74px;top:155.21px;font-size:11.5px;line-height:13.22px;color:#1b2f6e;font-weight:normal;white-space:nowrap;letter-spacing:-0.151px;">Elapsed Time</div>
<div style="position:absolute;left:73.74px;top:185.21px;font-size:11.5px;line-height:13.22px;color:#8a8a8a;font-weight:normal;white-space:nowrap;letter-spacing:0.037px;">Zoom to Marks</div>
<div style="position:absolute;left:73.74px;top:215.21px;font-size:11.5px;line-height:13.22px;color:#8a8a8a;font-weight:normal;white-space:nowrap;letter-spacing:-0.028px;">Previous group of Marks</div>
<div style="position:absolute;left:73.74px;top:245.21px;font-size:11.5px;line-height:13.22px;color:#8a8a8a;font-weight:normal;white-space:nowrap;letter-spacing:0.132px;">Next group of Marks</div>
<div style="position:absolute;left:73.74px;top:280.21px;font-size:11.5px;line-height:13.22px;color:#1b2f6e;font-weight:normal;white-space:nowrap;letter-spacing:0.065px;">Options</div>
<svg style="position:absolute;left:0px;top:0px" width="250" height="310" viewBox="0 0 250 310"><defs><linearGradient id="docg" x1="0" y1="0" x2="1" y2="1"><stop offset="0" stop-color="#ffffff"/><stop offset="1" stop-color="#dfe4ea"/></linearGradient></defs><path d="M49.5 55.5 H60.5 L64.5 59.5 V74.5 H49.5 Z" fill="url(#docg)" stroke="#8794a3" stroke-width="1"/><path d="M60.5 55.5 V59.5 H64.5" fill="#e4e8ee" stroke="#8794a3" stroke-width="1"/><path d="M43.5 57.5 H54.5 L58.5 61.5 V76.5 H43.5 Z" fill="url(#docg)" stroke="#8794a3" stroke-width="1"/><path d="M54.5 57.5 V61.5 H58.5" fill="#e4e8ee" stroke="#8794a3" stroke-width="1"/><path d="M59.5 102 L66.5 109.2" stroke="#5b8fd6" stroke-width="3.4" stroke-linecap="round"/><circle cx="51.5" cy="95" r="5.8" fill="#fff" stroke="#5b8fd6" stroke-width="1.4"/><rect x="48.3" y="94.3" width="6.4" height="1.5" fill="#0f2f6e"/><rect x="47.8" y="121.8" width="19.6" height="20" rx="1.5" fill="#e6e6e6" stroke="#a0a0a0" stroke-width="1.6"/><rect x="47.4" y="121.4" width="20.4" height="4.2" rx="1" fill="#a0a0a0"/><rect x="52" y="118.5" width="1.4" height="5" fill="#777777"/><rect x="61.5" y="118.5" width="1.4" height="5" fill="#777777"/><rect x="50.2" y="128.5" width="3.4" height="2.2" fill="#a0a0a0"/><rect x="50.2" y="133.2" width="3.4" height="2.2" fill="#a0a0a0"/><rect x="50.2" y="137.9" width="3.4" height="2.2" fill="#a0a0a0"/><rect x="55.9" y="128.5" width="3.4" height="2.2" fill="#a0a0a0"/><rect x="55.9" y="133.2" width="3.4" height="2.2" fill="#a0a0a0"/><rect x="55.9" y="137.9" width="3.4" height="2.2" fill="#a0a0a0"/><rect x="61.6" y="128.5" width="3.4" height="2.2" fill="#a0a0a0"/><rect x="61.6" y="133.2" width="3.4" height="2.2" fill="#a0a0a0"/><rect x="61.6" y="137.9" width="3.4" height="2.2" fill="#a0a0a0"/><circle cx="56.5" cy="161" r="10.3" fill="#fff" stroke="#5b8fd6" stroke-width="2.6"/><path d="M51 159 L55.5 163 L66 152" fill="none" stroke="#0f2f6e" stroke-width="2.2" stroke-linecap="round"/><path d="M56.5 151.5 V153.5 M56.5 168.5 V170.5 M47 161 H49 M64 161 H66" stroke="#5b8fd6" stroke-width="1.2"/><path d="M59 192.5 L65.5 199" stroke="#a0a0a0" stroke-width="3.2" stroke-linecap="round"/><circle cx="51.5" cy="185.5" r="5.8" fill="#ececec" stroke="#a0a0a0" stroke-width="1.3"/><path d="M48.5 185.5 H54.5 M51.5 182.5 V188.5" stroke="#777777" stroke-width="1.3"/><circle cx="56.5" cy="221" r="11.3" fill="#a6a6a6" stroke="#7a7a7a" stroke-width="0.8"/><path d="M59.5 214.5 L53 221 L59.5 227.5" fill="none" stroke="#e6e6e6" stroke-width="2.4"/><circle cx="56.5" cy="251" r="11.3" fill="#a6a6a6" stroke="#7a7a7a" stroke-width="0.8"/><path d="M53.5 244.5 L60 251 L53.5 257.5" fill="none" stroke="#e6e6e6" stroke-width="2.4"/><path d="M66.17,283.79 L66.42,285.03 L68.14,285.17 L68.14,287.43 L66.42,287.57 L66.17,288.81 L66.17,288.81 L65.76,290.01 L67.19,290.99 L66.06,292.95 L64.50,292.20 L63.66,293.16 L63.66,293.16 L62.70,294.00 L63.45,295.56 L61.49,296.69 L60.51,295.26 L59.31,295.67 L59.31,295.67 L58.07,295.92 L57.93,297.64 L55.67,297.64 L55.53,295.92 L54.29,295.67 L54.29,295.67 L53.09,295.26 L52.11,296.69 L50.15,295.56 L50.90,294.00 L49.94,293.16 L49.94,293.16 L49.10,292.20 L47.54,292.95 L46.41,290.99 L47.84,290.01 L47.43,288.81 L47.43,288.81 L47.18,287.57 L45.46,287.43 L45.46,285.17 L47.18,285.03 L47.43,283.79 L47.43,283.79 L47.84,282.59 L46.41,281.61 L47.54,279.65 L49.10,280.40 L49.94,279.44 L49.94,279.44 L50.90,278.60 L50.15,277.04 L52.11,275.91 L53.09,277.34 L54.29,276.93 L54.29,276.93 L55.53,276.68 L55.67,274.96 L57.93,274.96 L58.07,276.68 L59.31,276.93 L59.31,276.93 L60.51,277.34 L61.49,275.91 L63.45,277.04 L62.70,278.60 L63.66,279.44 L63.66,279.44 L64.50,280.40 L66.06,279.65 L67.19,281.61 L65.76,282.59 L66.17,283.79 Z" fill="#5b8fd6" stroke="#5b8fd6" stroke-width="1" stroke-linejoin="round"/><circle cx="56.8" cy="286.3" r="7" fill="#a9c1e6"/><circle cx="56.8" cy="286.3" r="4.9" fill="#0f2f6e"/><circle cx="56.8" cy="286.3" r="3.6" fill="#fff"/></svg>
</body></html>
